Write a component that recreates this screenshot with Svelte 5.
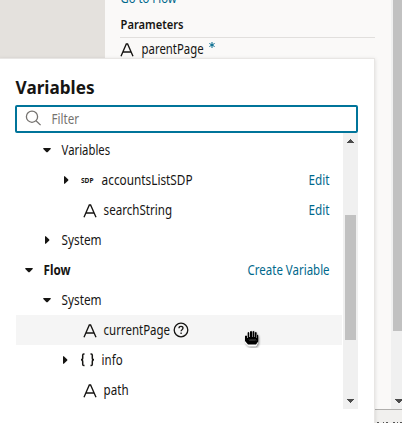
<script>
  const rows = [
    { text: 'Variables', width: 48.5, indent: 45, arrow: 'down' },
    { text: 'accountsListSDP', width: 91, indent: 85, arrow: 'right', icon: 'sdp', action: 'Edit', actionWidth: 21 },
    { text: 'searchString', width: 68.5, indent: 87, icon: 'text', action: 'Edit', actionWidth: 21 },
    { text: 'System', width: 40, indent: 45, arrow: 'right' },
    { text: 'Flow', width: 27, indent: 27, arrow: 'down', bold: true, action: 'Create Variable', actionWidth: 82 },
    { text: 'System', width: 40, indent: 45, arrow: 'down' },
    { text: 'currentPage', width: 66.5, indent: 87, icon: 'text', help: true, active: true },
    { text: 'info', width: 21, indent: 85, arrow: 'right', icon: 'object' },
    { text: 'path', width: 25, indent: 87, icon: 'text' }
  ];
</script>

{#snippet label(text, width, size = 14, weight = 400)}
  <svg class="label" {width} height="30" role="img" aria-label={text}>
    <text x="0.6" y="20.3" textLength={width} lengthAdjust="spacingAndGlyphs" font-size={size} font-weight={weight}>{text}</text>
  </svg>
{/snippet}

{#snippet letterIcon()}
  <svg class="letter" width="14" height="14" viewBox="0 0 14 14"><path d="M1 13.2 6.3 1h1.3L13 13.2M3.2 9h7.6" /></svg>
{/snippet}

<div class="screen">
  <div class="page">
    <aside></aside>
    <main>
      <div class="link">{@render label('Go to Flow', 56, 13)}</div>
      <h3>{@render label('Parameters', 63, 13, 600)}</h3>
      <div class="parameter">
        {@render letterIcon()}
        {@render label('parentPage', 62, 13.6)}
        <svg class="star" width="6" height="6" viewBox="0 0 6 6"><path d="M3 0v6M.4 1.5l5.2 3M5.6 1.5l-5.2 3" /></svg>
      </div>
    </main>
    <div class="outer-scroll"><i></i><svg width="9" height="5"><path d="M1 0h8v1H8v1H7v1H6v1H4V3H3V2H2V1H1Z" /></svg></div>
  </div>
  <footer><svg width="27" height="1"><path d="M2 .5h2M8 .5h1M11 .5h2M18 .5h2M22 .5h1M25 .5h2" /></svg></footer>

  <section class="popup">
    <h2>{@render label('Variables', 79, 18.5, 700)}</h2>
    <div class="search">
      <svg class="glass" width="17" height="17" viewBox="0 0 17 17"><circle cx="7" cy="6.7" r="5.6" /><path d="m11 10.8 4.6 4.3" /></svg>
      {@render label('Filter', 27.5)}
    </div>
    <div class="body">
      <div class="tree">
        {#each rows as row}
          <div class="row" class:active={row.active}>
            <div class="lead" style:width="{row.indent}px">
              {#if row.arrow === 'down'}
                <svg class="arrow down" width="8" height="5"><path d="M.3 0h7.4v1L4.5 4.3h-1L.3 1Z" /></svg>
              {:else if row.arrow === 'right'}
                <svg class="arrow right" class:wide={row.icon} width="5" height="8"><path d="M0 .3h.8l3.5 3.2v1L.8 7.7H0Z" /></svg>
              {/if}
              {#if row.icon === 'text'}
                {@render letterIcon()}
              {:else if row.icon === 'sdp'}
                <svg class="sdp" width="13" height="8"><text x="0" y="6.9" textLength="12.5" lengthAdjust="spacingAndGlyphs">SDP</text></svg>
              {:else if row.icon === 'object'}
                <svg class="object" width="15" height="14" viewBox="0 0 15 14"><path d="M4.5 1h-.7Q2.7 1 2.7 2.3v2.6Q2.7 6.8 1 6.8q1.7 0 1.7 1.9v2.6q0 1.3 1.1 1.3h.7M10.5 1h.7q1.1 0 1.1 1.3v2.6q0 1.9 1.7 1.9-1.7 0-1.7 1.9v2.6q0 1.3-1.1 1.3h-.7" /></svg>
              {/if}
            </div>
            {@render label(row.text, row.width, 14, row.bold ? 700 : 400)}
            {#if row.help}
              <svg class="help" width="16" height="16" viewBox="0 0 16 16"><circle cx="8" cy="8" r="6.8" /><path d="M6 6.2Q6 4.4 8 4.4q2 0 2 1.7 0 1-1 1.7-.9.6-.9 1.5M8.1 10.6v1.4" /></svg>
            {/if}
            {#if row.action}
              <a href="#action">{@render label(row.action, row.actionWidth)}</a>
            {/if}
          </div>
        {/each}
      </div>
      <div class="scroll">
        <svg width="7" height="4"><path d="M3 0h1v1h1v1h1v1h1v1H0V3h1V2h1V1h1Z" /></svg>
        <i></i>
        <svg width="7" height="4"><path d="M0 0h7v1H6v1H5v1H4v1H3V3H2V2H1V1H0Z" /></svg>
      </div>
    </div>
  </section>

  <svg class="cursor" width="17" height="18" viewBox="0 0 17 18">
    <path class="shade" d="M1.5 7q1-1 2 0V3q1-1.3 2 0V1.6q1-1.3 2 0 1.2-1.3 2 0v1q1-1 2 .2V5q1.5-.8 2 .5v7.3L12 16H4.5L1.5 13Z" />
    <path d="M1 6q1-.8 2 0v2h.6V2.7q1-1.2 1.7 0V7h.7V1.5q1-1.2 2 0V7h.5V1.5q1-1.2 1.8 0V7h.5V2.5q1-1.2 1.8 0V8h.4V5q1-.6 1.2.5v6L12 14.5H4L1 11Z" />
    <path class="knuckles" d="M5 9.5l1 1 1-1 1 1 1-1 1 1 1-1 1 1" />
  </svg>
</div>

<style>
  :global(body) { overflow: hidden; }
  .screen {
    position: relative;
    width: 402px;
    height: 423px;
    overflow: hidden;
    background: #f1f0ee;
    color: #161513;
    font-family: 'Noto Sans', 'Open Sans', sans-serif;
  }
  svg { display: block; flex: none; fill: none; stroke: currentColor; }
  .label { fill: currentColor; stroke: none; overflow: visible; }
  .page { display: flex; height: 409px; background: #faf9f8; }
  aside { width: 105px; background: #e4e1dd; }
  main { flex: 1; padding: 0 16px 0 15px; }
  .link { height: 9px; margin-top: -17px; padding-bottom: 17px; color: #00688c; }
  h3 { height: 28px; margin: 0; border-bottom: 1px solid #e1dfdd; }
  .parameter { display: flex; align-items: center; height: 22px; }
  .parameter .letter { margin: 2px 7px 0 0; }
  .letter { stroke-width: 1.35; }
  .star { margin: -9px 0 0 6px; color: #00688c; }
  .outer-scroll { display: flex; flex-direction: column; align-items: flex-end; width: 11px; background: #f0f0f0; }
  .outer-scroll i { width: 9px; height: 331px; background: #c1c1c1; }
  .outer-scroll svg { margin: 68px -1px 0 0; fill: #4c4c4c; stroke: none; }
  footer { display: flex; align-items: flex-end; justify-content: flex-end; height: 13px; border-top: 1px solid #b0afad; color: #555; }
  .popup {
    position: absolute;
    left: -1px;
    top: 58px;
    box-sizing: border-box;
    width: 376px;
    height: 370px;
    padding: 14px 16px 0;
    background: #fff;
    border: 1px solid #e8e6e4;
    box-shadow: 0 1px 4px #0002;
  }
  h2 { height: 31px; margin: 0 0 0 -1px; padding-top: 1px; }
  .search {
    display: flex;
    align-items: center;
    box-sizing: border-box;
    width: 343px;
    height: 28px;
    margin-left: -1px;
    padding-left: 8px;
    border: 2px solid #00749a;
    border-radius: 2px;
    color: #75726f;
  }
  .glass { margin: -2px 9.5px 0 -.5px; stroke-width: 1.3; }
  .body { display: flex; width: 343px; height: 276px; margin-left: -1px; }
  .tree { width: 327px; margin: 2px 1px 0 0; }
  .row { display: flex; align-items: center; height: 30px; margin-left: 1px; }
  .active { background: #f5f5f5; }
  .lead { display: flex; align-items: center; justify-content: flex-end; flex: none; height: 30px; }
  .arrow { fill: currentColor; stroke: none; }
  .down { margin-right: 10px; }
  .right { margin-right: 11px; }
  .right.wide { margin-right: 12px; }
  .sdp { fill: currentColor; stroke: none; font-size: 6.5px; font-weight: 700; margin: 0 7px 0 0; }
  .lead > .letter { margin: 1px 6px 0 0; }
  .object { margin-right: 6px; stroke-width: 1.5; }
  .help { margin: 0 0 0 3.5px; stroke-width: 1.3; }
  a { margin-left: auto; margin-right: 13px; color: #00688c; text-decoration: none; }
  .scroll { display: flex; flex-direction: column; align-items: center; width: 15px; background: #f0f0f0; }
  .scroll svg { margin-top: 6px; fill: #4c4c4c; stroke: none; }
  .scroll i { width: 11px; height: 125px; margin: 72px 0 53px; background: #c1c1c1; }
  .cursor { position: absolute; left: 244px; top: 330px; fill: #000; stroke: none; }
  .shade { fill: #fff; stroke: #fff; stroke-width: 1; filter: drop-shadow(1px 1px 1px #0007); }
  .knuckles { fill: none; stroke: #777; stroke-width: .7; }
</style>
